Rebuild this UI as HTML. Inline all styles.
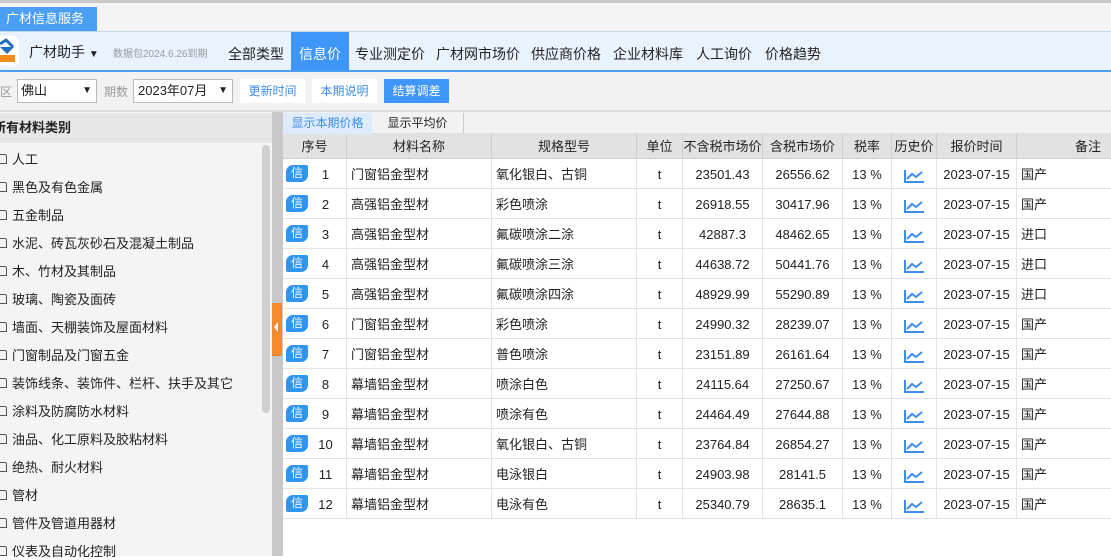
<!DOCTYPE html><html><head><meta charset="utf-8"><style>
*{margin:0;padding:0;box-sizing:border-box}
body{width:1111px;height:556px;overflow:hidden;background:#fff;font-family:"Liberation Sans","Noto Sans CJK SC",sans-serif;font-size:13px;color:#222;position:relative}
.a{position:absolute}
.row{position:absolute;left:283px;width:828px;height:30px;border-bottom:1px solid #e4e4e4}
.c{position:absolute;top:0;height:30px;line-height:31px;border-right:1px solid #e4e4e4;text-align:center;white-space:nowrap}
.l{text-align:left;padding-left:4px}
.h .c{height:25px;line-height:25px;border-right:1px solid #cfcfcf}
.tag{position:absolute;left:3px;top:6px;width:22px;height:17px;background:#2f95f0;border-radius:7px 2px 7px 2px;color:#fff;font-size:12px;line-height:17px;text-align:center}
.li{position:absolute;left:12px;font-size:13px}
.ic{position:absolute;left:0;width:7px;height:10px;border:1px solid #555;border-left:none;border-radius:0 2px 0 0}
</style></head><body>
<div class="a" style="left:0;top:0;width:1111px;height:3px;background:#c9c9c9"></div>
<div class="a" style="left:0;top:3px;width:1111px;height:28px;background:#f4f4f4"></div>
<div class="a" style="left:0;top:7px;width:97px;height:24px;background:#4a9ff5;color:#fff;font-size:13px;line-height:24px;padding-left:6px">广材信息服务</div>
<div class="a" style="left:0;top:31px;width:1111px;height:41px;background:#eaf2fe;border-top:1px solid #c6d6ea;border-bottom:2px solid #4a9ff5"></div>
<div class="a" style="left:0;top:36px;width:19px;height:30px;background:#fff;border-radius:0 5px 5px 0"></div>
<svg class="a" style="left:0;top:38px" width="17" height="26"><path d="M0 6 L6 2 L13 9" stroke="#1f6fc2" stroke-width="3" fill="none"/><path d="M0 9 L7 16 L14 9" fill="#1f6fc2"/><rect x="0" y="17" width="15" height="7" fill="#f28a1c"/></svg>
<div class="a" style="left:29px;top:42px;font-size:14px">广材助手 <span style="font-size:10px">▼</span></div>
<div class="a" style="left:113px;top:45px;font-size:10px;color:#999">数据包2024.6.26到期</div>
<div class="a" style="left:291px;top:32px;width:58px;height:38px;background:#3d96f8"></div>
<div class="a" style="left:228px;top:44px;font-size:14px">全部类型</div>
<div class="a" style="left:299px;top:44px;font-size:14px;color:#fff">信息价</div>
<div class="a" style="left:355px;top:44px;font-size:14px">专业测定价</div>
<div class="a" style="left:436px;top:44px;font-size:14px">广材网市场价</div>
<div class="a" style="left:531px;top:44px;font-size:14px">供应商价格</div>
<div class="a" style="left:613px;top:44px;font-size:14px">企业材料库</div>
<div class="a" style="left:696px;top:44px;font-size:14px">人工询价</div>
<div class="a" style="left:765px;top:44px;font-size:14px">价格趋势</div>
<div class="a" style="left:0;top:72px;width:1111px;height:38px;background:#f2f2f2"></div>
<div class="a" style="left:0;top:83px;font-size:12px;color:#999">区</div>
<div class="a" style="left:17px;top:79px;width:80px;height:24px;background:#fff;border:1px solid #bbb;line-height:22px;padding-left:3px;font-size:13px">佛山<span style="position:absolute;right:4px;font-size:10px">▼</span></div>
<div class="a" style="left:104px;top:83px;font-size:12px;color:#999">期数</div>
<div class="a" style="left:133px;top:79px;width:100px;height:24px;background:#fff;border:1px solid #bbb;line-height:22px;padding-left:4px;font-size:13px">2023年07月<span style="position:absolute;right:4px;font-size:10px">▼</span></div>
<div class="a" style="left:240px;top:79px;width:65px;height:24px;background:#fff;color:#3d8ee8;line-height:24px;text-align:center;font-size:12px">更新时间</div>
<div class="a" style="left:312px;top:79px;width:65px;height:24px;background:#fff;color:#3d8ee8;line-height:24px;text-align:center;font-size:12px">本期说明</div>
<div class="a" style="left:384px;top:79px;width:65px;height:24px;background:#3d96f8;color:#fff;line-height:24px;text-align:center;font-size:12px">结算调差</div>
<div class="a" style="left:0;top:110px;width:1111px;height:2px;background:#ddd"></div>
<div class="a" style="left:0;top:112px;width:272px;height:444px;background:#f4f4f4;overflow:hidden"><div style="position:absolute;left:0;top:1px;width:272px;height:30px;background:#e6e6e6"></div><div style="position:absolute;left:-7px;top:1px;line-height:30px;font-size:13px;font-weight:bold">所有材料类别</div></div>
<div class="a" style="left:262px;top:145px;width:8px;height:268px;background:#cfcfcf;border-radius:4px"></div>
<div class="a" style="left:272px;top:112px;width:11px;height:444px;background:#c8c8c8"></div>
<div class="a" style="left:272px;top:303px;width:10px;height:53px;background:#f58a2d"></div>
<div class="a" style="left:274px;top:322px;width:0;height:0;border-right:4px solid #fff;border-top:5px solid transparent;border-bottom:5px solid transparent"></div>
<div class="a" style="left:283px;top:112px;width:828px;height:22px;background:#f2f2f2;border-bottom:1px solid #ddd"></div>
<div class="a" style="left:283px;top:113px;width:89px;height:21px;background:#ddebfb;color:#3d8ee8;line-height:21px;text-align:center;font-size:12px">显示本期价格</div>
<div class="a" style="left:372px;top:113px;width:92px;height:21px;border-right:1px solid #ccc;line-height:21px;text-align:center;font-size:12px">显示平均价</div>
<div class="a" style="left:283px;top:520px;width:828px;height:36px;background:#fff"></div>
<div id="L"></div><div id="T"></div>
<script>
var items=["人工","黑色及有色金属","五金制品","水泥、砖瓦灰砂石及混凝土制品","木、竹材及其制品","玻璃、陶瓷及面砖","墙面、天棚装饰及屋面材料","门窗制品及门窗五金","装饰线条、装饰件、栏杆、扶手及其它","涂料及防腐防水材料","油品、化工原料及胶粘材料","绝热、耐火材料","管材","管件及管道用器材","仪表及自动化控制"];
var h="";items.forEach(function(t,i){var y=149+i*28;h+='<div class="ic" style="top:'+(y+5)+'px"></div><div class="li" style="top:'+y+'px">'+t+'</div>'});
document.getElementById("L").innerHTML=h;
var cols=[[0,64],[64,145],[209,145],[354,46],[400,80],[480,80],[560,49],[609,45],[654,80],[734,94]];
var hd=["序号","材料名称","规格型号","单位","不含税市场价","含税市场价","税率","历史价","报价时间","备注"];
var d=[["门窗铝金型材","氧化银白、古铜","23501.43","26556.62","国产"],["高强铝金型材","彩色喷涂","26918.55","30417.96","国产"],["高强铝金型材","氟碳喷涂二涂","42887.3","48462.65","进口"],["高强铝金型材","氟碳喷涂三涂","44638.72","50441.76","进口"],["高强铝金型材","氟碳喷涂四涂","48929.99","55290.89","进口"],["门窗铝金型材","彩色喷涂","24990.32","28239.07","国产"],["门窗铝金型材","普色喷涂","23151.89","26161.64","国产"],["幕墙铝金型材","喷涂白色","24115.64","27250.67","国产"],["幕墙铝金型材","喷涂有色","24464.49","27644.88","国产"],["幕墙铝金型材","氧化银白、古铜","23764.84","26854.27","国产"],["幕墙铝金型材","电泳银白","24903.98","28141.5","国产"],["幕墙铝金型材","电泳有色","25340.79","28635.1","国产"]];
var s='<div class="row h" style="top:134px;height:25px;background:#e2e2e2;border-bottom:1px solid #cfcfcf">';
hd.forEach(function(t,i){s+='<div class="c" style="left:'+cols[i][0]+'px;width:'+cols[i][1]+'px;'+(i==9?'text-align:right;padding-right:10px;border-right:none':'')+'">'+t+'</div>'});s+='</div>';
var chart='<svg width="20" height="14" style="vertical-align:middle"><path d="M1 1V13H20M3 10L8 5L12 8L18 3" stroke="#3d8ee8" stroke-width="2" fill="none"/></svg>';
d.forEach(function(r,k){var v=['<span class="tag">信</span>'+(k+1),r[0],r[1],"t",r[2],r[3],"13 %",chart,"2023-07-15",r[4]];
s+='<div class="row" style="top:'+(159+k*30)+'px">';v.forEach(function(t,i){var cl=(i==1||i==2||i==9)?"c l":"c";s+='<div class="'+cl+'" style="left:'+cols[i][0]+'px;width:'+cols[i][1]+'px;'+(i==0?'padding-left:22px':'')+(i==9?';border-right:none':'')+'">'+t+'</div>'});s+='</div>'});
document.getElementById("T").innerHTML=s;
</script>
</body></html>
